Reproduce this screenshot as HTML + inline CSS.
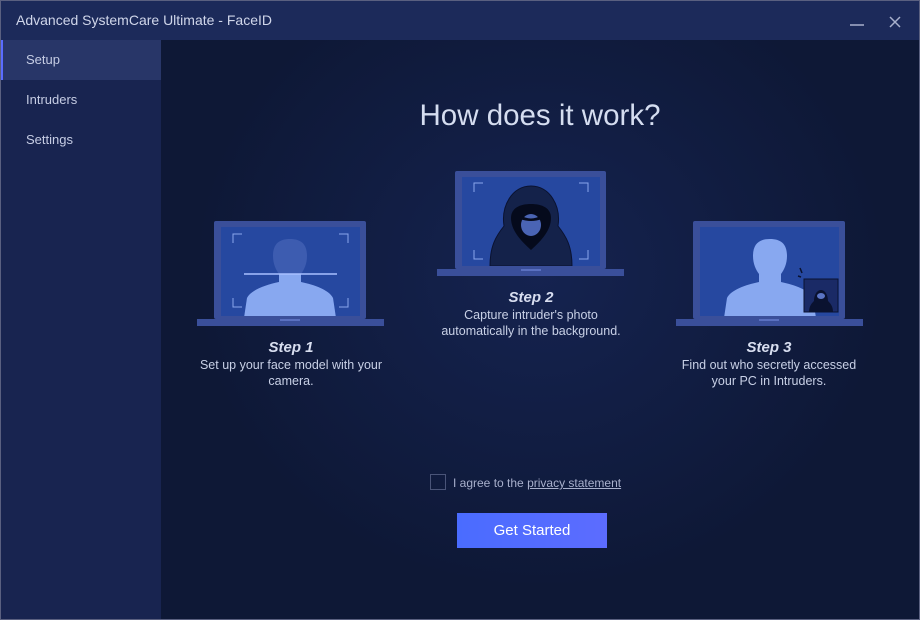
<!DOCTYPE html>
<html><head><meta charset="utf-8"><style>
*{margin:0;padding:0;box-sizing:border-box}
body{width:920px;height:620px;overflow:hidden;background:#0e1836;font-family:"Liberation Sans",sans-serif;position:relative}
.win{position:absolute;left:0;top:0;width:920px;height:620px;border:1px solid #5a6080}
.title{position:absolute;left:1px;top:1px;width:918px;height:39px;background:#1c2a5a;color:#d0d6ea;font-size:14px;line-height:38px;padding-left:15px}
.side{position:absolute;left:1px;top:40px;width:160px;height:579px;background:#182450}
.item{height:40px;line-height:40px;padding-left:25px;color:#c6cde4;font-size:13px}
.item.sel{background:#283668;border-left:2px solid #5a6cff;padding-left:23px}
.main{position:absolute;left:161px;top:40px;width:758px;height:579px;background:radial-gradient(ellipse at 50% 40%,#152350 0%,#0e1836 65%)}
.t{position:absolute;color:#c8d0e6;text-align:center;font-size:12.5px;line-height:16px}
.st{font-weight:bold;font-style:italic;font-size:15px;color:#d8def0;display:block;line-height:18px}
.btn{position:absolute;left:457px;top:513px;width:150px;height:35px;background:linear-gradient(90deg,#4a6cff,#5c6cff);color:#fff;font-size:15px;text-align:center;line-height:35px}
</style></head><body>
<div class="win"></div>
<div class="title">Advanced SystemCare Ultimate - FaceID</div>
<svg style="position:absolute;left:840px;top:10px" width="70" height="25"><line x1="10" y1="15" x2="24" y2="15" stroke="#a8b0cc" stroke-width="1.5"/><path d="M50 7L60 17M60 7L50 17" stroke="#a8b0cc" stroke-width="1.5"/></svg>
<div class="side"><div class="item sel">Setup</div><div class="item">Intruders</div><div class="item">Settings</div></div>
<div class="main"></div>
<div class="t" style="left:350px;top:98px;width:380px;font-size:29.5px;line-height:36px;color:#d5ddf0">How does it work?</div>
<svg style="position:absolute;left:0;top:0" width="920" height="620">
<defs><clipPath id="c1"><rect x="221" y="227" width="139" height="89"/></clipPath><clipPath id="c3"><rect x="700" y="227" width="139" height="89"/></clipPath><clipPath id="c2"><rect x="462" y="177" width="138" height="89"/></clipPath><clipPath id="lo"><rect x="200" y="274" width="180" height="60"/></clipPath></defs>
<rect x="214" y="221" width="152" height="98" fill="#3a4f9a" rx="2"/>
<rect x="221" y="227" width="139" height="89" fill="#2648a0"/>
<rect x="197" y="319" width="187" height="7" fill="#3a4f9a"/><rect x="280" y="319" width="20" height="2" fill="#5a70c0"/>
<g clip-path="url(#c1)"><path d="M273 256c0-12 6-17 17-17s17 5 17 17c0 8-3 14-6 18v8c14 3 28 8 32 16l3 20h-92l3-20c4-8 18-13 32-16v-8c-3-4-6-10-6-18z" fill="#3d5cb0"/>
<g clip-path="url(#lo)"><path d="M273 256c0-12 6-17 17-17s17 5 17 17c0 8-3 14-6 18v8c14 3 28 8 32 16l3 20h-92l3-20c4-8 18-13 32-16v-8c-3-4-6-10-6-18z" fill="#88a8f0"/></g></g>
<line x1="244" y1="274" x2="337" y2="274" stroke="#a8c0ff" stroke-width="1.5"/>
<path d="M233 243v-9h9M348 243v-9h-9M233 298v9h9M348 298v9h-9" stroke="#8aa6ec" fill="none"/>
<rect x="455" y="171" width="151" height="98" fill="#3a4f9a" rx="2"/>
<rect x="462" y="177" width="138" height="89" fill="#2648a0"/>
<rect x="437" y="269" width="187" height="7" fill="#3a4f9a"/><rect x="521" y="269" width="20" height="2" fill="#5a70c0"/>
<g clip-path="url(#c2)"><path d="M490 266c0-20 6-30 14-40c-3-20 8-40 27-40s30 20 27 40c8 10 14 20 14 40z" fill="#14224a" stroke="#0a1230"/>
<path d="M511 218c0-10 9-14 20-14s20 4 20 14c0 12-9 22-20 32c-11-10-20-20-20-32z" fill="#050a1c"/>
<ellipse cx="531" cy="225" rx="10" ry="11" fill="#4a64b4"/><path d="M520 215q11 7 22 0v4q-11 4-22 0z" fill="#050a1c"/></g>
<path d="M474 192v-9h9M588 192v-9h-9M474 250v9h9M588 250v9h-9" stroke="#8aa6ec" fill="none"/>
<rect x="693" y="221" width="152" height="98" fill="#3a4f9a" rx="2"/>
<rect x="700" y="227" width="139" height="89" fill="#2648a0"/>
<rect x="676" y="319" width="187" height="7" fill="#3a4f9a"/><rect x="759" y="319" width="20" height="2" fill="#5a70c0"/>
<g clip-path="url(#c3)"><path d="M753 256c0-12 6-17 17-17s17 5 17 17c0 8-3 14-6 18v8c14 3 28 8 32 16l3 20h-92l3-20c4-8 18-13 32-16v-8c-3-4-6-10-6-18z" fill="#88a8f0"/></g>
<rect x="804" y="279" width="34" height="33" fill="#1a2a66" stroke="#0a1230"/>
<path d="M809 312c0-6 3-9 5-11c0-6 3-11 7-11s7 5 7 11c2 2 5 5 5 11z" fill="#0a1230"/><ellipse cx="821" cy="296" rx="4" ry="3" fill="#5a74c4"/>
<path d="M800 268l2 5M798 276l3 1" stroke="#0a1230" stroke-width="1.5"/>
<rect x="430.5" y="474.5" width="15" height="15" fill="none" stroke="#4a5478"/>
</svg>
<div class="t" style="left:180px;top:339px;width:222px"><span class="st">Step 1</span>Set up your face model with your<br>camera.</div>
<div class="t" style="left:420px;top:289px;width:222px"><span class="st">Step 2</span>Capture intruder's photo<br>automatically in the background.</div>
<div class="t" style="left:658px;top:339px;width:222px"><span class="st">Step 3</span>Find out who secretly accessed<br>your PC in Intruders.</div>
<div class="t" style="left:453px;top:475px;font-size:12px;color:#a8b0cc;text-align:left;white-space:nowrap">I agree to the <u>privacy statement</u></div>
<div class="btn">Get Started</div>
</body></html>
